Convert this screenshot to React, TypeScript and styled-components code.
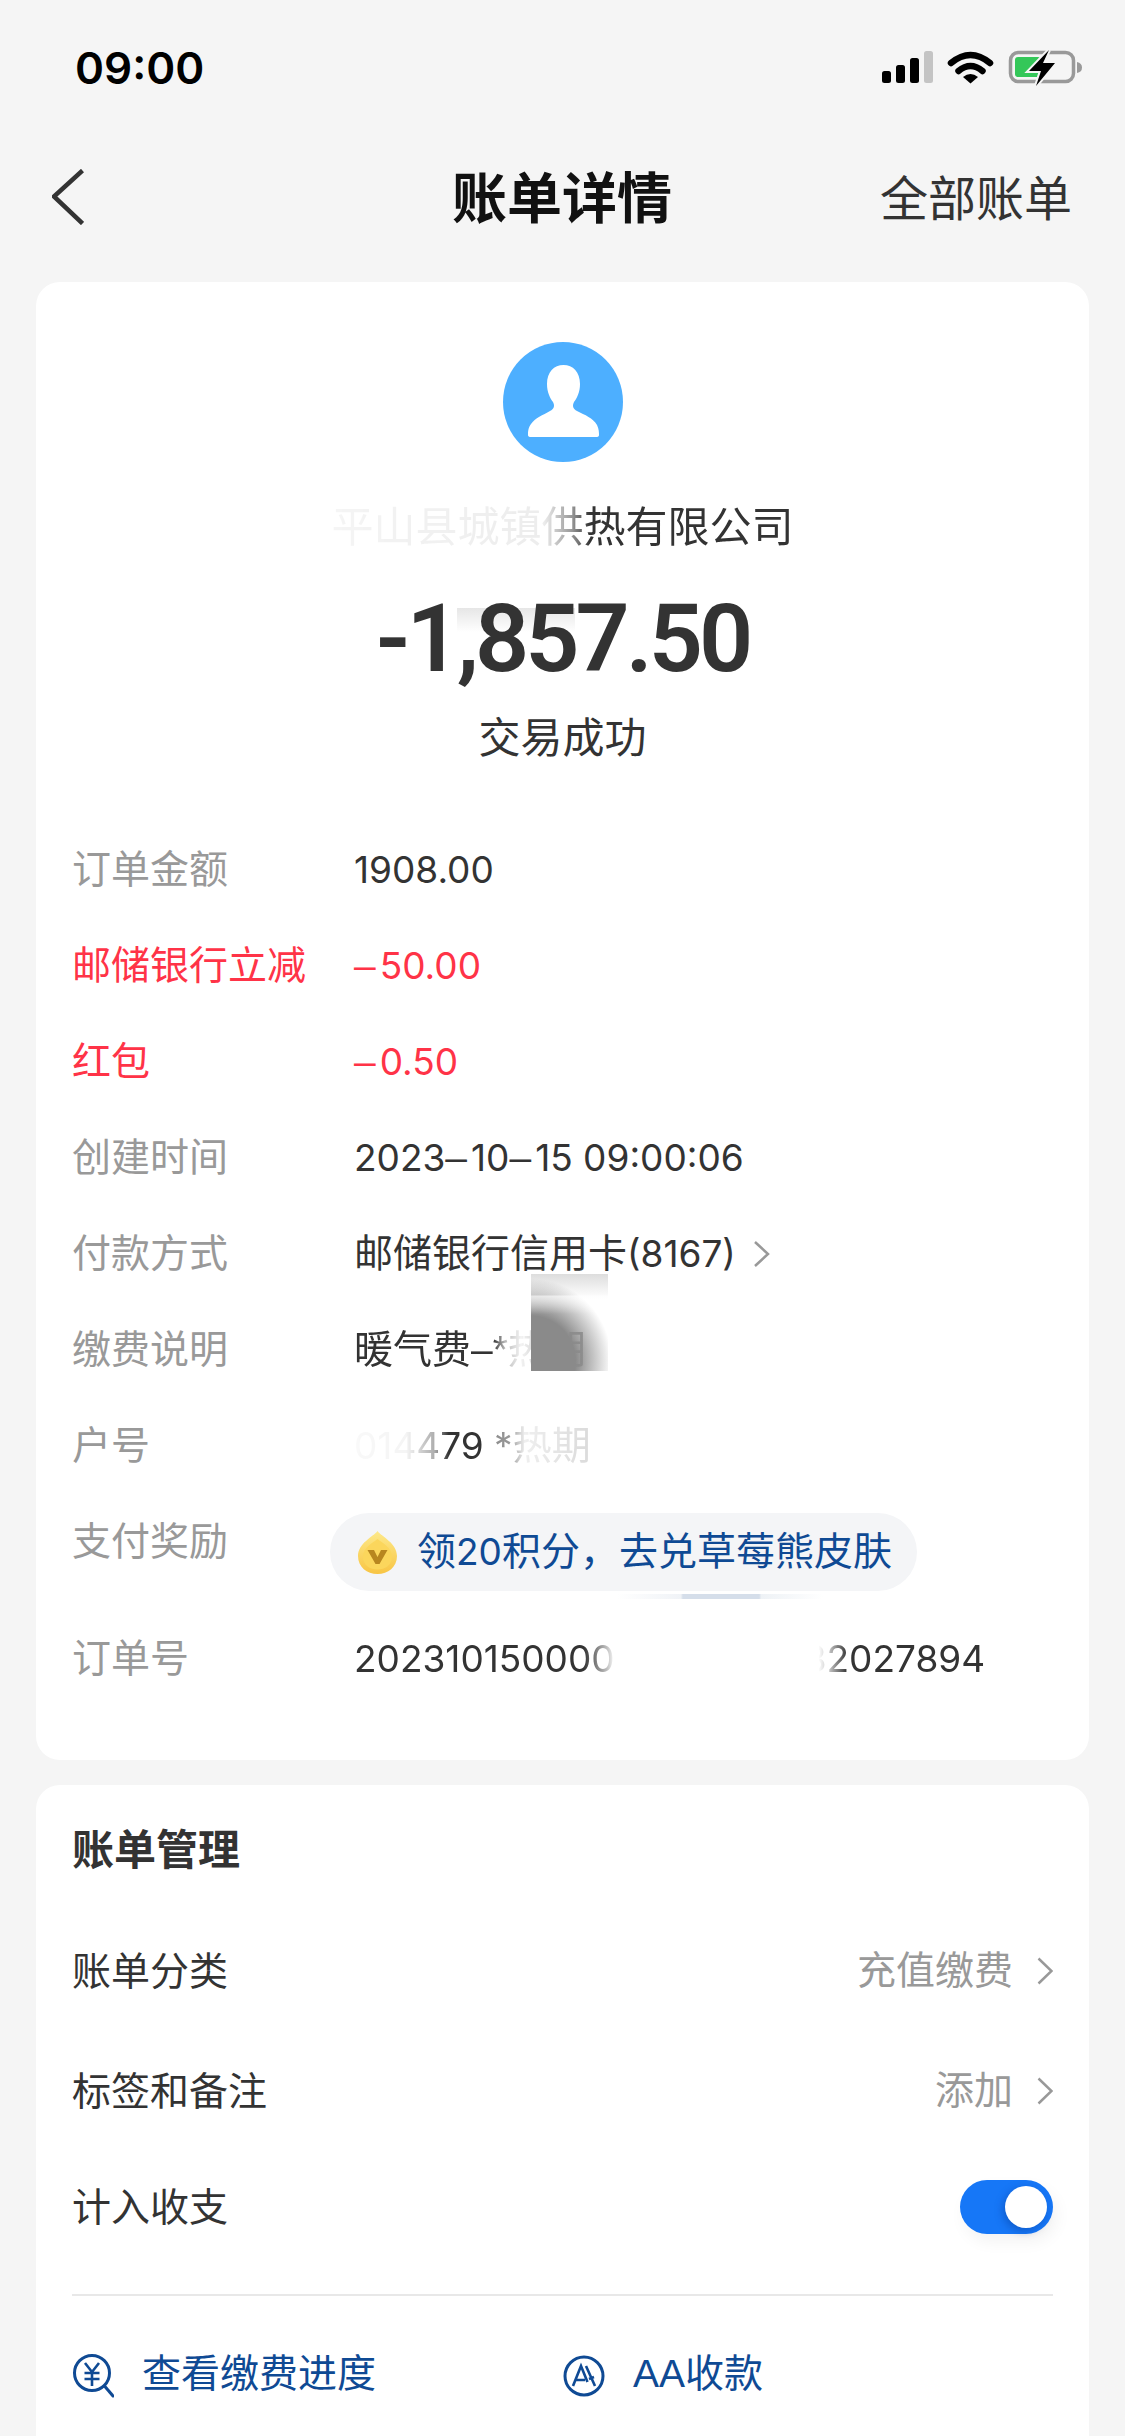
import React from 'react';
import styled, {createGlobalStyle} from 'styled-components';

const GlobalStyle = createGlobalStyle`
  html, body {
    margin: 0;
    padding: 0;
    background: #f5f5f5;
  }
`;

const Page = styled.div`
    width: 1125px;
    height: 2436px;
    overflow: hidden;
    display: flex;
    flex-direction: column;
    background: #f5f5f5;
    color: #333;
    font-family: 'Liberation Sans', 'Noto Sans CJK SC', sans-serif;
`;

const StatusBar = styled.div`
    height: 136px;
    box-sizing: border-box;
    flex-shrink: 0;
    display: flex;
    align-items: center;
    justify-content: space-between;
    padding: 0 43px 0 75px;
`;

const Time = styled.div`
    font-family: Inter, sans-serif;
    font-size: 44px;
    font-weight: 600;
    color: #000;
`;

const Nav = styled.div`
    height: 122px;
    flex-shrink: 0;
    display: grid;
    grid-template-columns: 1fr auto 1fr;
    align-items: center;
    padding: 0 53px 0 52px;
`;

const NavTitle = styled.div`
    margin-bottom: 6px;
    font-size: 55px;
    font-weight: 700;
    color: #111;
`;

const NavLink = styled.div`
    margin-bottom: 4px;
    font-size: 48px;
    color: #333;
    justify-self: end;
`;

const Card = styled.div`
    margin: 0 36px;
    background: #fff;
    border-radius: 24px;
`;

const DetailCard = styled(Card)`
    margin-top: 24px;
    padding: 60px 36px 53px;
    display: flex;
    flex-direction: column;
`;

const Header = styled.div`
    position: relative;
    display: flex;
    flex-direction: column;
    align-items: center;
`;

const Avatar = styled.svg`
    width: 120px;
    height: 120px;
`;

const Payee = styled.div`
    margin-top: 36px;
    font-size: 42px;
    line-height: 60px;
`;

const Smudge = styled.div`
    position: absolute;
    left: 385px;
    top: 266px;
    width: 118px;
    height: 24px;
    background: linear-gradient(to bottom, #e6e6e6, rgba(255, 255, 255, 0));
`;

const Amount = styled.div`
    position: relative;
    margin-top: 26px;
    font-family: Roboto, sans-serif;
    font-size: 95px;
    font-weight: 600;
    line-height: 110px;
    letter-spacing: -4px;
    color: #333;
`;

const Result = styled.div`
    margin-top: 15px;
    font-size: 42px;
    line-height: 60px;
`;

const Rows = styled.div`
    margin-top: 53px;
    display: flex;
    flex-direction: column;
`;

const Row = styled.div<{$height?: number}>`
    position: relative;
    display: grid;
    grid-template-columns: 282px 1fr;
    height: ${props => props.$height ?? 96}px;
    font-size: 39px;
    line-height: 96px;
`;

const Label = styled.div<{$red?: boolean}>`
    color: ${props => (props.$red ? '#ff3347' : '#999')};
`;

const Value = styled.div<{$red?: boolean}>`
    position: relative;
    display: flex;
    align-items: center;
    height: 96px;
    color: ${props => (props.$red ? '#ff3347' : '#333')};
`;

// digits in the reference are rounder and wider than Liberation Sans
const Num = styled.span`
    font-family: Inter, sans-serif;
    font-size: 37px;
`;

const Dash = styled.span`
    font-family: 'Liberation Sans', sans-serif;
    font-size: 39px;
    margin-right: 4px;
`;

const Faded = styled.span<{$mask: string}>`
    mask-image: linear-gradient(to right, ${props => props.$mask});
    -webkit-mask-image: linear-gradient(to right, ${props => props.$mask});
`;

const PayChevron = styled.svg`
    width: 18px;
    height: 28px;
    margin-left: 17px;
`;

const GreyBlock = styled.div`
    position: absolute;
    left: 177px;
    top: -28px;
    width: 77px;
    height: 97px;
    background:
        linear-gradient(to bottom, rgba(255, 255, 255, 0) 21px, rgba(255, 255, 255, 0.6) 22px, rgba(255, 255, 255, 0) 40px),
        radial-gradient(ellipse 105% 85% at 0% 90%, #8a8a8a 0 55%, rgba(138, 138, 138, 0) 100%),
        linear-gradient(to bottom, rgba(170, 170, 170, 0.4), rgba(235, 235, 235, 0.3) 20px, rgba(255, 255, 255, 0) 25px);
`;

const RewardPill = styled.div`
    margin: 19px 0 0 -24px;
    height: 78px;
    width: fit-content;
    box-sizing: border-box;
    display: flex;
    align-items: center;
    gap: 20px;
    padding: 0 25px 0 28px;
    border-radius: 39px;
    background: #f4f5f7;
    color: #0f4a94;
    line-height: 78px;
    white-space: nowrap;
`;

const Streak = styled.div`
    position: absolute;
    left: 545px;
    top: 100px;
    width: 206px;
    height: 5px;
    background: linear-gradient(
        to right,
        rgba(240, 243, 247, 0),
        #f0f3f7 31%,
        #d5deea 32%,
        #d5deea 69%,
        #eef2f6 70%,
        rgba(240, 243, 247, 0)
    );
`;

const OrderGap = styled.span`
    width: 189px;
`;

const ManageCard = styled(Card)`
    margin-top: 25px;
    flex: 1;
    border-radius: 24px 24px 0 0;
    padding: 36px 36px 0;
`;

const ManageTitle = styled.div`
    font-size: 42px;
    font-weight: 700;
    line-height: 60px;
    margin-bottom: 30px;
`;

const ManageRow = styled.div<{$height?: number}>`
    height: ${props => props.$height ?? 120}px;
    display: flex;
    align-items: center;
    justify-content: space-between;
    font-size: 39px;
`;

const ManageLabel = styled.span`
    margin-bottom: 6px;
`;

const ManageValue = styled.div`
    display: flex;
    align-items: center;
    gap: 24px;
    color: #999;
`;

const ManageValueText = styled.span`
    margin-bottom: 8px;
`;

const Chevron = styled.svg`
    width: 16px;
    height: 28px;
`;

const Toggle = styled.div`
    position: relative;
    width: 93px;
    height: 54px;
    border-radius: 27px;
    background: #1677f7;
    box-shadow: 4px 8px 16px rgba(0, 0, 0, 0.05);
`;

const Knob = styled.div`
    position: absolute;
    top: 6px;
    right: 6px;
    width: 42px;
    height: 42px;
    border-radius: 50%;
    background: #fff;
    box-shadow: -2px 3px 8px rgba(0, 40, 120, 0.35);
`;

const Divider = styled.div`
    height: 2px;
    margin-top: 31px;
    background: #e8e8e8;
`;

const Actions = styled.div`
    display: grid;
    grid-template-columns: 491px 1fr;
    margin-top: 48px;
    font-size: 39px;
    line-height: 60px;
    color: #0f4a94;
`;

const Action = styled.div`
    display: flex;
    align-items: center;
    gap: 28px;
`;

const ActionIcon = styled.svg`
    width: 42px;
    height: 48px;
    flex-shrink: 0;
`;

const StatusIcons = () => (
    <svg width="200" height="36" viewBox="0 0 200 36">
        <rect x="0" y="21" width="9" height="12" rx="2.5" fill="#000" />
        <rect x="14" y="15" width="9" height="18" rx="2.5" fill="#000" />
        <rect x="28" y="8" width="9" height="25" rx="2.5" fill="#000" />
        <rect x="42" y="1" width="9" height="32" rx="2.5" fill="#c4c4c4" />
        <path d="M69 13Q88.5-3 108 13" fill="none" stroke="#000" strokeWidth="6.5" strokeLinecap="round" />
        <path d="M76.5 21Q88.5 11 100.5 21" fill="none" stroke="#000" strokeWidth="6.5" strokeLinecap="round" />
        <path d="M81 27Q88.5 21 96 27L88.5 33.5Z" fill="#000" />
        <rect x="128.5" y="2.5" width="63" height="29" rx="8" fill="none" stroke="#999" strokeWidth="3.5" />
        <rect x="133" y="7" width="26" height="20" rx="3" fill="#34c759" />
        <path d="M195 12Q200 13 200 17.5T195 23Z" fill="#999" />
        <path
            d="M167 0L147 21H159L154 36L173 13H161Z"
            fill="#000"
            stroke="#f5f5f5"
            strokeWidth="4"
            paintOrder="stroke"
        />
    </svg>
);

const BackIcon = () => (
    <svg width="32" height="56" viewBox="0 0 32 56">
        <path d="M30.5 1.5L2 27.5L30.5 54.5" fill="none" stroke="#333" strokeWidth="4.5" />
    </svg>
);

const PersonIcon = () => (
    <Avatar viewBox="0 0 120 120">
        <circle cx="60" cy="60" r="60" fill="#4dafff" />
        <path
            d="M60.5 23C70 23 77 30 77 42C77 50 74 56 71 60C69 64 70 67 74 69C82 73 90 76 94 83C96 87 96 91 96 93Q96 95 93 95L28 95Q25 95 25 93C25 90 25 86 28 82C32 76 40 73 47 69C51 67 52 64 50 60C47 56 44 50 44 42C44 30 51 23 60.5 23Z"
            fill="#fff"
        />
    </Avatar>
);

const CoinIcon = () => (
    <svg width="39" height="43" viewBox="0 0 39 43" style={{flexShrink: 0}}>
        <defs>
            <linearGradient id="coin" x1="0" y1="0" x2="0" y2="1">
                <stop offset="0" stopColor="#fde98a" />
                <stop offset="1" stopColor="#f8c544" />
            </linearGradient>
        </defs>
        <path d="M19.5 0C24 6 39 12 39 25C39 36 30 43 19.5 43C9 43 0 36 0 25C0 12 15 6 19.5 0Z" fill="url(#coin)" />
        <path d="M19.5 8C24 12 34 16 34 26C34 34 27 38.5 19.5 38.5C12 38.5 5 34 5 26C5 16 15 12 19.5 8Z" fill="#fbd65c" />
        <path d="M9.5 19H16L19.5 26L23 19H29.5L21.5 33H17.5Z" fill="#b8861f" />
    </svg>
);

const ChevronIcon = () => (
    <Chevron viewBox="0 0 16 28">
        <path d="M1.5 1.5L14.5 14L1.5 26.5" fill="none" stroke="#999" strokeWidth="2.5" />
    </Chevron>
);

const ProgressIcon = () => (
    <ActionIcon viewBox="0 0 42 48">
        <circle cx="20" cy="23" r="17.5" fill="none" stroke="#0f4a94" strokeWidth="3" />
        <path d="M32.5 36L41 46" fill="none" stroke="#0f4a94" strokeWidth="3" strokeLinecap="round" />
        <path
            d="M13 13L20 22L27 13M12.5 23H27.5M12.5 29H27.5M20 22V36"
            fill="none"
            stroke="#0f4a94"
            strokeWidth="2.6"
        />
    </ActionIcon>
);

const SplitIcon = () => (
    <ActionIcon viewBox="0 0 42 48">
        <circle cx="21" cy="26" r="19" fill="none" stroke="#0f4a94" strokeWidth="3" />
        <path
            d="M10 36L18 16L24.5 32M13 30H22M23 16L32 36M26 29L31 27"
            fill="none"
            stroke="#0f4a94"
            strokeWidth="2.6"
        />
    </ActionIcon>
);

export default function App() {
    return (
        <Page>
            <GlobalStyle />
            <StatusBar>
                <Time>09:00</Time>
                <StatusIcons />
            </StatusBar>
            <Nav>
                <BackIcon />
                <NavTitle>账单详情</NavTitle>
                <NavLink>全部账单</NavLink>
            </Nav>
            <DetailCard>
                <Header>
                    <PersonIcon />
                    <Payee>
                        <Faded $mask="rgba(0,0,0,.05) 0%, rgba(0,0,0,.09) 46%, rgba(0,0,0,.5) 52%, #000 56%">
                            平山县城镇供热有限公司
                        </Faded>
                    </Payee>
                    <Smudge />
                    <Amount>-1,857.50</Amount>
                    <Result>交易成功</Result>
                </Header>
                <Rows>
                    <Row>
                        <Label>订单金额</Label>
                        <Value><Num>1908.00</Num></Value>
                    </Row>
                    <Row>
                        <Label $red>邮储银行立减</Label>
                        <Value $red><Num><Dash>–</Dash>50.00</Num></Value>
                    </Row>
                    <Row>
                        <Label $red>红包</Label>
                        <Value $red><Num><Dash>–</Dash>0.50</Num></Value>
                    </Row>
                    <Row>
                        <Label>创建时间</Label>
                        <Value><Num>2023<Dash>–</Dash>10<Dash>–</Dash>15 09:00:06</Num></Value>
                    </Row>
                    <Row>
                        <Label>付款方式</Label>
                        <Value>
                            邮储银行信用卡<Num>(8167)</Num>
                            <PayChevron viewBox="0 0 18 28">
                                <path d="M2 2L15 14L2 26" fill="none" stroke="#999" strokeWidth="2.5" />
                            </PayChevron>
                        </Value>
                    </Row>
                    <Row>
                        <Label>缴费说明</Label>
                        <Value>
                            <Faded $mask="#000 60%, rgba(0,0,0,.35) 65%, rgba(0,0,0,.06) 72%, rgba(0,0,0,.5) 92%">
                                暖气费–*热期
                            </Faded>
                            <GreyBlock />
                        </Value>
                    </Row>
                    <Row>
                        <Label>户号</Label>
                        <Value>
                            <Faded $mask="rgba(0,0,0,.03) 0%, rgba(0,0,0,.05) 22%, rgba(0,0,0,.4) 34%, #000 40%, #000 54%, rgba(0,0,0,.55) 60%, rgba(0,0,0,.5) 66%, rgba(0,0,0,.08) 72%, rgba(0,0,0,.18) 100%">
                                <Num>014479 *</Num>热期
                            </Faded>
                        </Value>
                    </Row>
                    <Row $height={117}>
                        <Label>支付奖励</Label>
                        <RewardPill>
                            <CoinIcon />
                            <span>领<Num>20</Num>积分，去兑草莓熊皮肤</span>
                        </RewardPill>
                        <Streak />
                    </Row>
                    <Row>
                        <Label>订单号</Label>
                        <Value>
                            <Faded $mask="#000 88%, rgba(0,0,0,.3) 97%, transparent 100%"><Num>202310150000</Num></Faded>
                            <OrderGap />
                            <Faded $mask="transparent 8%, rgba(0,0,0,.3) 14%, #000 24%"><Num>32027894</Num></Faded>
                        </Value>
                    </Row>
                </Rows>
            </DetailCard>
            <ManageCard>
                <ManageTitle>账单管理</ManageTitle>
                <ManageRow>
                    <ManageLabel>账单分类</ManageLabel>
                    <ManageValue>
                        <ManageValueText>充值缴费</ManageValueText>
                        <ChevronIcon />
                    </ManageValue>
                </ManageRow>
                <ManageRow>
                    <ManageLabel>标签和备注</ManageLabel>
                    <ManageValue>
                        <ManageValueText>添加</ManageValueText>
                        <ChevronIcon />
                    </ManageValue>
                </ManageRow>
                <ManageRow $height={112}>
                    <ManageLabel>计入收支</ManageLabel>
                    <Toggle>
                        <Knob />
                    </Toggle>
                </ManageRow>
                <Divider />
                <Actions>
                    <Action>
                        <ProgressIcon />
                        查看缴费进度
                    </Action>
                    <Action>
                        <SplitIcon />
                        AA收款
                    </Action>
                </Actions>
            </ManageCard>
        </Page>
    );
}
